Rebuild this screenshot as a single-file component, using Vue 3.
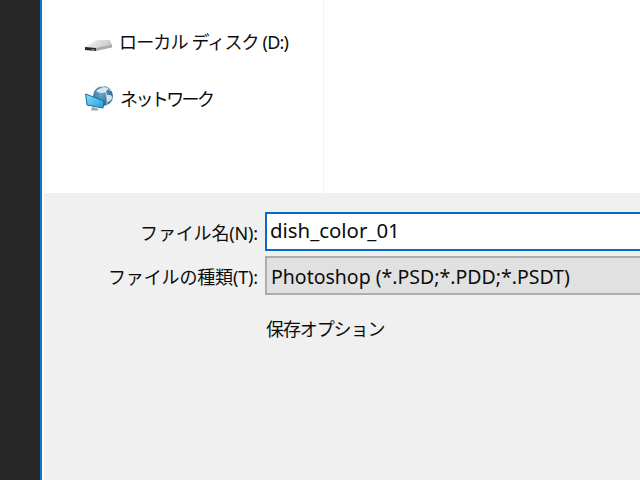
<script setup>
</script>

<template>
  <div class="screen">
    <div class="rail"></div>
    <div class="dialog">
      <div class="top">
        <nav class="nav">
          <div class="nav-item drive-item">
            <svg class="drive" width="30" height="16" viewBox="0 0 30 16">
              <defs>
                <linearGradient id="dt" x1="0" y1="0" x2="1" y2="0.3">
                  <stop offset="0" stop-color="#f6f6f6" />
                  <stop offset="1" stop-color="#c8cacc" />
                </linearGradient>
              </defs>
              <path d="M1 10 L13 3 L26 3 L28 8 L12 12 Z" fill="url(#dt)" />
              <path d="M12 11 L28 7.5 L28 10.5 L12 14 Z" fill="#a9abad" />
              <path d="M1 10 L12 11 L12 14 L1 13 Z" fill="#262626" />
              <rect x="7.5" y="12" width="3" height="1.5" fill="#46a55c" />
            </svg>
            <span class="disk-name">ローカル ディスク (D:)</span>
          </div>
          <div class="nav-item net-item">
            <svg class="net" width="30" height="28" viewBox="0 0 30 28">
              <defs>
                <radialGradient id="globe" cx="0.4" cy="0.4" r="0.7">
                  <stop offset="0" stop-color="#6ea6c9" />
                  <stop offset="1" stop-color="#1d5f8f" />
                </radialGradient>
                <linearGradient id="scr" x1="0" y1="0" x2="1" y2="1">
                  <stop offset="0" stop-color="#8fdcf8" />
                  <stop offset="1" stop-color="#1c9ee0" />
                </linearGradient>
              </defs>
              <circle cx="19" cy="11" r="10" fill="url(#globe)" />
              <path d="M12 6 Q17 1 24 3 Q23 8 18 8 Q14 8 12 6 Z" fill="#d5e6ef" />
              <path d="M23 10 Q27 9 28.5 12 Q27 17 23 17 Z" fill="#cfe2ec" />
              <path d="M9 3 Q19 -1 27 6 M19 1 Q24 9 23 20" fill="none" stroke="#e8f2f7" stroke-width="0.8" />
              <path d="M1.6 9 L20 16 L19 23 L3 20 Z" fill="url(#scr)" stroke="#14709f" stroke-width="1" />
              <path d="M8 22 L13 23 L15 25.5 L7 25.5 Z" fill="#a2a6aa" />
            </svg>
            <span class="net-name">ネットワーク</span>
          </div>
        </nav>
      </div>
      <div class="bottom">
        <div class="form">
          <label class="lbl">ファイル名(N):</label>
          <div class="field input">dish_color_01</div>
          <label class="lbl">ファイルの種類(T):</label>
          <div class="field select">Photoshop (*.PSD;*.PDD;*.PSDT)</div>
          <span></span>
          <div class="opts">保存オプション</div>
        </div>
      </div>
    </div>
  </div>
</template>

<style scoped>
.screen {
  display: flex;
  width: 640px;
  height: 480px;
  overflow: hidden;
  background: #fff;
  font-family: "Noto Sans", "Noto Sans CJK JP", sans-serif;
  font-size: 18px;
  color: #0c0c0c;
}
.rail {
  width: 40px;
  flex: none;
  background: #272727;
  border-right: 2px solid #0a78d7;
}
.dialog {
  flex: 1;
  display: flex;
  flex-direction: column;
  min-width: 0;
}
.top {
  height: 193px;
  flex: none;
  background: #fff;
}
.nav {
  width: 282px;
  height: 100%;
  box-sizing: border-box;
  border-right: 1px solid #f4f4f4;
  padding: 28px 0 0 42px;
  display: flex;
  flex-direction: column;
  gap: 29px;
}
.nav-item {
  display: flex;
  align-items: center;
  height: 28px;
  line-height: 28px;
  white-space: nowrap;
}
.drive {
  margin-right: 5px;
  margin-top: 6px;
}
.net {
  margin-right: 6px;
}
.disk-name {
  font-size: 18px;
  letter-spacing: -0.85px;
}
.net-name {
  font-size: 18px;
  letter-spacing: -2.6px;
}
.bottom {
  flex: 1;
  margin-left: 2px;
  background: #f0f0f0;
  padding-top: 19px;
}
.form {
  display: grid;
  grid-template-columns: 221px 1fr;
  grid-template-rows: 39px 39px auto;
  row-gap: 5px;
  align-items: center;
}
.lbl {
  justify-self: end;
  padding-right: 7px;
  white-space: nowrap;
  font-size: 18px;
  letter-spacing: -0.15px;
}
.field {
  height: 39px;
  box-sizing: border-box;
  padding-left: 3px;
  white-space: nowrap;
}
.input {
  background: #fff;
  border: 2px solid #0a68c8;
  border-right: 0;
  font-size: 20.4px;
  line-height: 32px;
}
.select {
  background: #e1e1e1;
  border: 2px solid #adadad;
  border-right: 0;
  padding-left: 4px;
  font-size: 19.5px;
  line-height: 38px;
}
.opts {
  margin-top: 15px;
  margin-left: 1px;
  line-height: 28px;
  font-size: 18px;
  letter-spacing: -1.1px;
}
</style>
